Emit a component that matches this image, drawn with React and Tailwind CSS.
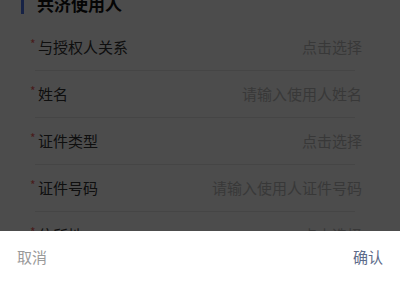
import React from "react";

const rows = [
  { label: "与授权人关系", value: "点击选择" },
  { label: "姓名", value: "请输入使用人姓名" },
  { label: "证件类型", value: "点击选择" },
  { label: "证件号码", value: "请输入使用人证件号码" },
  { label: "住所地", value: "点击选择" },
];

export default function App() {
  return (
    <div
      className="relative w-[400px] h-[300px] overflow-hidden bg-white"
      style={{ fontFamily: '"Noto Sans CJK SC", "Noto Sans", sans-serif' }}
    >
      <div className="-mt-[16px]">
        <div className="flex items-center h-[40px] pl-[21px]">
          <div className="w-[3px] h-[20px] bg-[#4a74e8]" />
          <div className="ml-[13px] text-[17px] font-bold text-[#111]">共济使用人</div>
        </div>
        {rows.map((r) => (
          <div key={r.label}>
            <div className="pl-[30px] pr-[38px] h-[46px] flex items-center justify-between">
              <div className="flex items-center">
                <span className="text-[#f06060] text-[12px] w-[8px] -mt-[6px]">*</span>
                <span className="text-[15px] text-[#333]">{r.label}</span>
              </div>
              <span className="text-[15px] text-[#bdbdbd]">{r.value}</span>
            </div>
            <div className="ml-[35px] mr-[45px] h-px bg-[#e6e6e6]" />
          </div>
        ))}
      </div>
      <div className="absolute inset-0 bg-black/70" />
      <div className="absolute left-0 right-0 bottom-0 h-[69px] bg-white">
        <div className="flex items-center justify-between h-[52px] pl-[17px] pr-[17px]">
          <span className="text-[15px] text-[#9a9a9a]">取消</span>
          <span className="text-[15px] text-[#5d6b8a]">确认</span>
        </div>
      </div>
    </div>
  );
}
